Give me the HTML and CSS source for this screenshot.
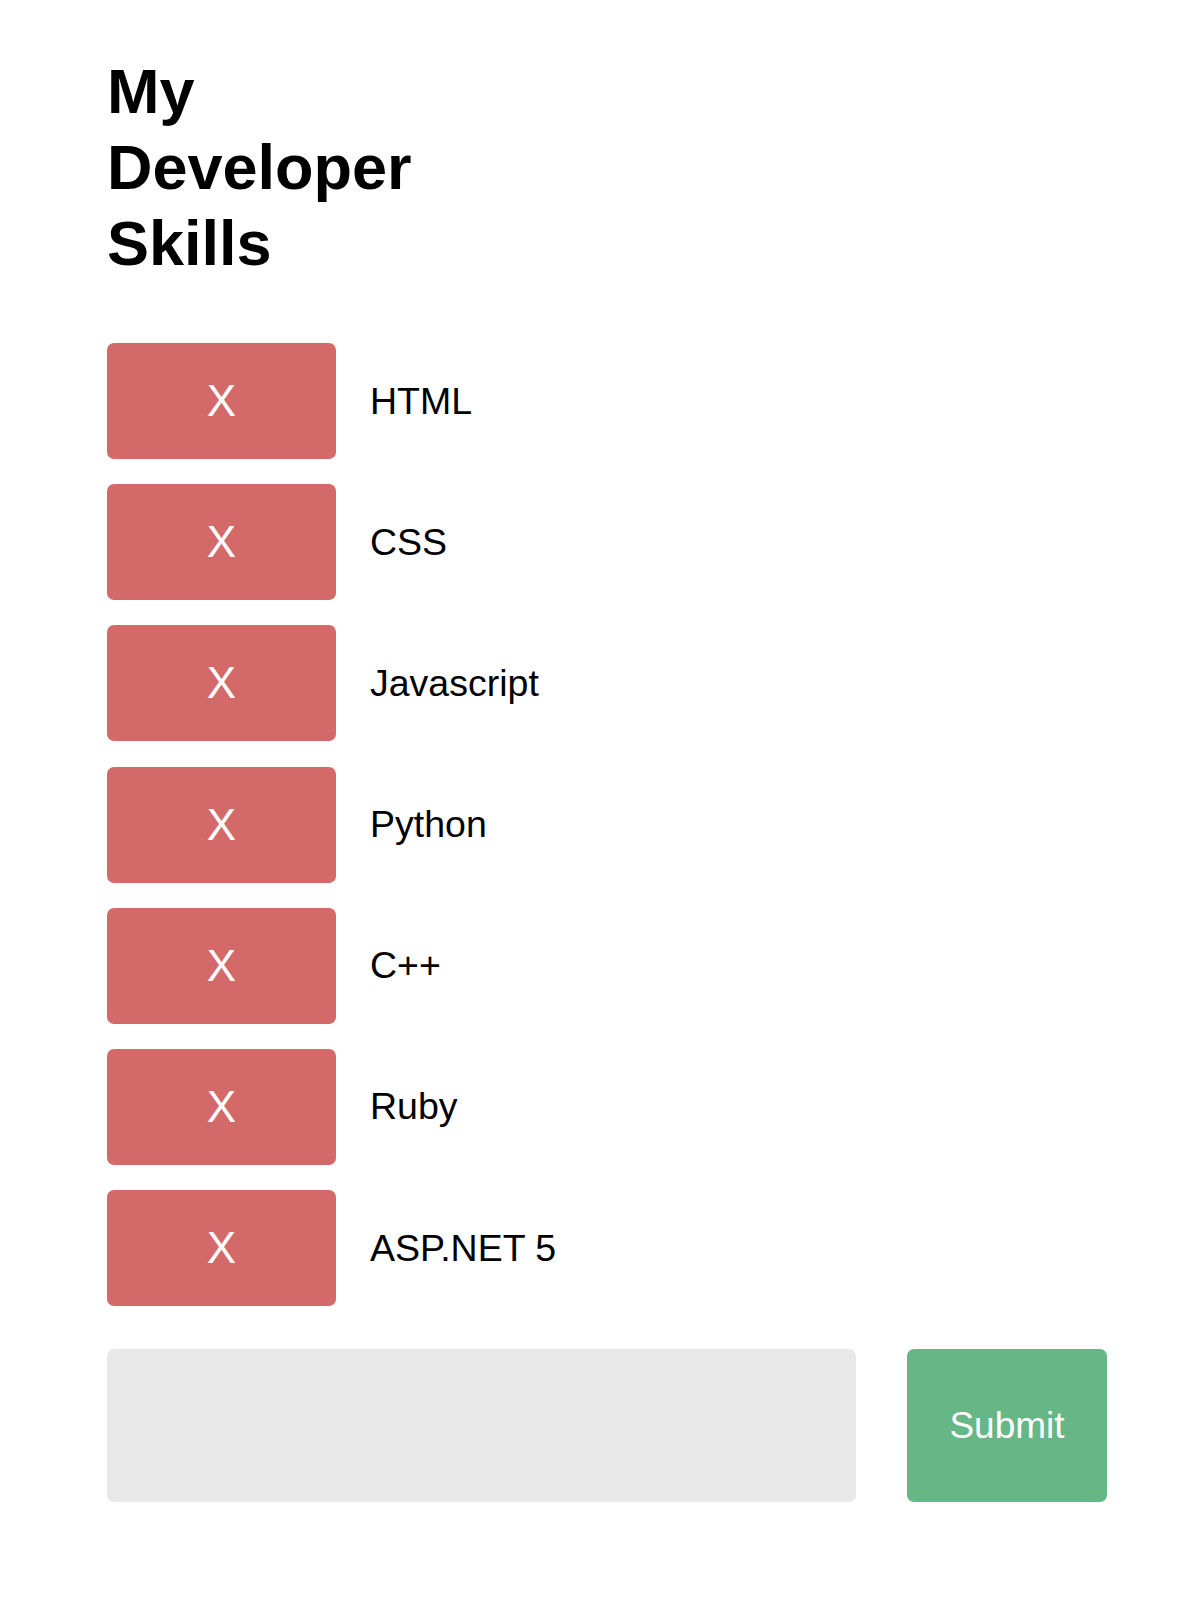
FILE: index.html
```html
<!DOCTYPE html>
<html lang="en">
<head>
<meta charset="utf-8">
<title>My Developer Skills</title>
<link rel="stylesheet" href="styles.css">
</head>
<body>
<main class="app">
  <h1 class="title">My<br>Developer<br>Skills</h1>
  <ul class="skills">
    <li class="skill"><button class="remove" type="button">X</button><span class="label">HTML</span></li>
    <li class="skill"><button class="remove" type="button">X</button><span class="label">CSS</span></li>
    <li class="skill"><button class="remove" type="button">X</button><span class="label">Javascript</span></li>
    <li class="skill"><button class="remove" type="button">X</button><span class="label">Python</span></li>
    <li class="skill"><button class="remove" type="button">X</button><span class="label">C++</span></li>
    <li class="skill"><button class="remove" type="button">X</button><span class="label">Ruby</span></li>
    <li class="skill"><button class="remove" type="button">X</button><span class="label">ASP.NET 5</span></li>
  </ul>
  <form class="add-form">
    <input class="add-input" type="text" aria-label="New skill">
    <button class="submit" type="button">Submit</button>
  </form>
</main>
</body>
</html>
```
FILE: styles.css
```css
html, body {
  margin: 0;
  padding: 0;
  background: #ffffff;
}

body {
  font-family: "Liberation Sans", Arial, sans-serif;
  color: #000000;
}

.app {
  padding: 53px 0 0 107px;
  width: 1000px;
}

.title {
  margin: 0;
  font-size: 63px;
  line-height: 76px;
  font-weight: 700;
}

.skills {
  list-style: none;
  margin: 62px 0 0 0;
  padding: 0;
  display: flex;
  flex-direction: column;
  gap: 25.2px;
}

.skill {
  display: flex;
  align-items: center;
  gap: 34px;
}

.remove {
  width: 229px;
  height: 116px;
  border: none;
  border-radius: 7px;
  background: #d4696a;
  color: #ffffff;
  font-family: "Liberation Sans", Arial, sans-serif;
  font-size: 44px;
  padding: 0;
  flex: none;
}

.label {
  font-size: 37.5px;
}

.add-form {
  margin-top: 43px;
  display: flex;
  align-items: center;
  gap: 51px;
}

.add-input {
  width: 749px;
  height: 153px;
  box-sizing: border-box;
  border: none;
  border-radius: 7px;
  background: #e8e8e8;
  font-family: "Liberation Sans", Arial, sans-serif;
  font-size: 37px;
  padding: 0 20px;
  outline: none;
}

.submit {
  width: 200px;
  height: 153px;
  border: none;
  border-radius: 7px;
  background: #67b685;
  color: #ffffff;
  font-family: "Liberation Sans", Arial, sans-serif;
  font-size: 37px;
  padding: 0;
}
```
